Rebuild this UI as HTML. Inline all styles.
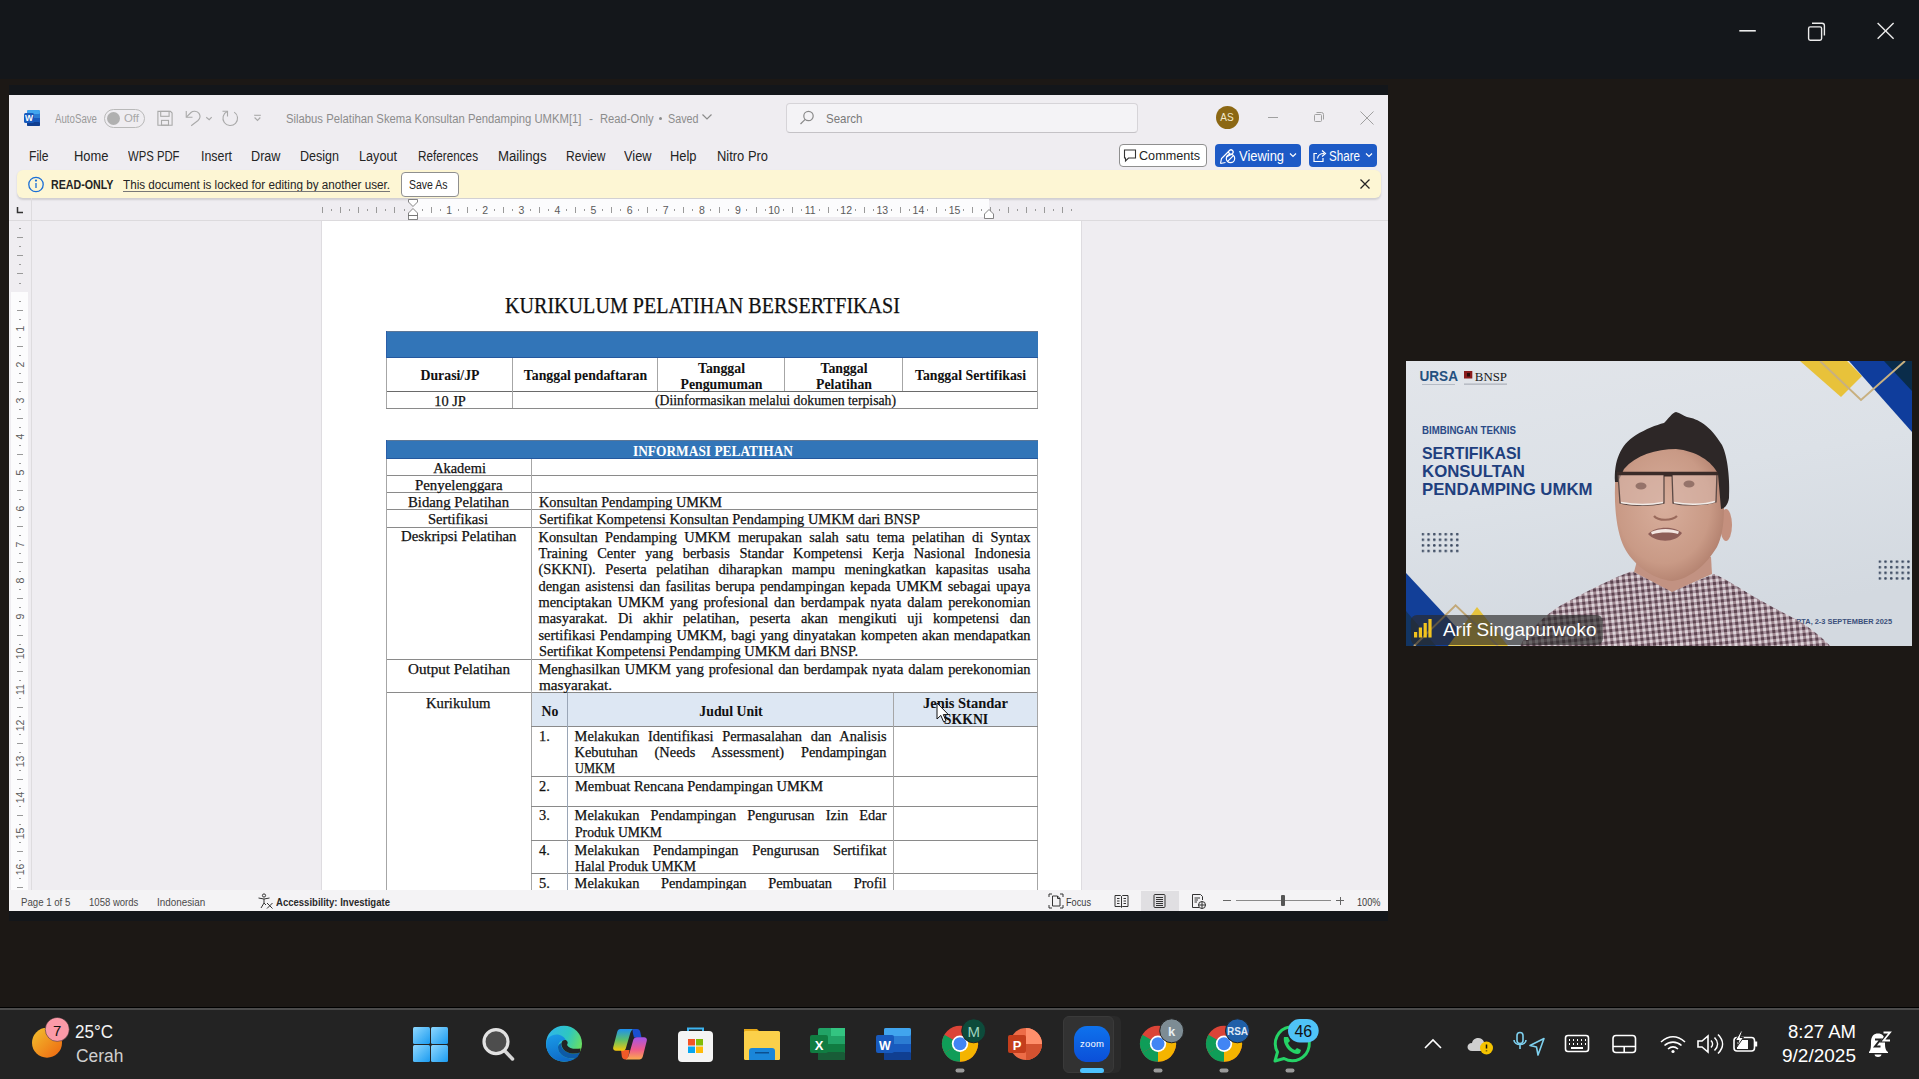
<!DOCTYPE html>
<html><head><meta charset="utf-8">
<style>
*{margin:0;padding:0;box-sizing:border-box}
html,body{width:1919px;height:1079px;overflow:hidden;background:#1c1815;font-family:"Liberation Sans",sans-serif;position:relative}
.a{position:absolute}
.t{position:absolute;white-space:pre;line-height:1;display:inline-block}
.s{font-family:"Liberation Serif",serif;color:#111;-webkit-text-stroke:0.25px currentColor}
.b{font-weight:bold}
.hl{position:absolute;height:1px;background:#8a8a8a}
.vl{position:absolute;width:1px;background:#8a8a8a}
.jl{position:absolute;white-space:nowrap;line-height:1;text-align:justify;text-align-last:justify;font-family:"Liberation Serif",serif;color:#111;font-size:14.4px;-webkit-text-stroke:0.25px #111}
</style></head>
<body>
<!-- zoom top bar -->
<div class="a" style="left:0;top:0;width:1919px;height:79px;background:#14171b"></div>
<!-- window controls -->
<svg class="a" style="left:1730px;top:15px" width="175" height="32" viewBox="0 0 175 32">
 <g stroke="#ececec" stroke-width="1.4" fill="none">
  <line x1="9.3" y1="15.8" x2="25.8" y2="15.8" stroke-width="1.6"></line>
  <rect x="78.6" y="11.9" width="13" height="13.3" rx="1.6"></rect>
  <path d="M82 8.2 h10 a2.4 2.4 0 0 1 2.4 2.4 v10"></path>
  <line x1="147.6" y1="8" x2="163.6" y2="23.8"></line><line x1="163.6" y1="8" x2="147.6" y2="23.8"></line>
 </g>
</svg>
<!-- window shadow strips -->
<div class="a" style="left:9px;top:85px;width:1379px;height:10px;background:#13161a"></div>
<div class="a" style="left:9px;top:911px;width:1379px;height:10px;background:#13161a"></div>

<!-- WORD WINDOW -->
<div class="a" id="win" style="left:9px;top:95px;width:1379px;height:816px;background:#efedf1;overflow:hidden">
</div>


<div class="a" style="left:0;top:0;width:1919px;height:1079px;clip-path:inset(221px 531px 189px 9px)">
<div class="a" style="left:322px;top:221px;width:759px;height:680px;background:#ffffff"></div>
<div class="a" style="left:321px;top:221px;width:1px;height:680px;background:#dedce0"></div>
<div class="a" style="left:1081px;top:221px;width:1px;height:680px;background:#dedce0"></div>
<div class="t s" style="left: 504.5px; top: 294px; font-size: 23px; color: rgb(17, 17, 17); transform: scaleX(0.8734); transform-origin: left top;">KURIKULUM PELATIHAN BERSERTFIKASI</div>
<div class="a" style="left:386px;top:331px;width:652px;height:27px;background:#3275b8"></div>
<div class="a" style="left:386px;top:331px;width:652px;height:1px;background:#5c7797"></div>
<div class="a" style="left:386px;top:357px;width:652px;height:1px;background:#24589e"></div>
<div class="a" style="left:386px;top:331px;width:1px;height:27px;background:#2a5ea8"></div>
<div class="a" style="left:386px;top:358px;width:1px;height:34px;background:#a6a6a6"></div>
<div class="a" style="left:512px;top:358px;width:1px;height:34px;background:#a6a6a6"></div>
<div class="a" style="left:657px;top:358px;width:1px;height:34px;background:#a6a6a6"></div>
<div class="a" style="left:784px;top:358px;width:1px;height:34px;background:#a6a6a6"></div>
<div class="a" style="left:902px;top:358px;width:1px;height:34px;background:#a6a6a6"></div>
<div class="a" style="left:1037px;top:358px;width:1px;height:34px;background:#a6a6a6"></div>
<div class="a" style="left:386px;top:391px;width:652px;height:1px;background:#6a6a6a"></div>
<div class="a" style="left:386px;top:391px;width:1px;height:18px;background:#a6a6a6"></div>
<div class="a" style="left:512px;top:391px;width:1px;height:18px;background:#a6a6a6"></div>
<div class="a" style="left:1037px;top:391px;width:1px;height:18px;background:#a6a6a6"></div>
<div class="a" style="left:386px;top:408px;width:652px;height:1px;background:#8a8a8a"></div>
<div class="t s" style="left:150.0px;width:600px;text-align:center;top:369.2px;font-size:13.8px;color:#111;font-weight:bold;-webkit-text-stroke:0.05px currentColor;">Durasi/JP</div>
<div class="t s" style="left:285.5px;width:600px;text-align:center;top:369.2px;font-size:13.8px;color:#111;font-weight:bold;-webkit-text-stroke:0.05px currentColor;">Tanggal pendaftaran</div>
<div class="t s" style="left:421.5px;width:600px;text-align:center;top:361.5px;font-size:13.8px;color:#111;font-weight:bold;-webkit-text-stroke:0.05px currentColor;">Tanggal</div>
<div class="t s" style="left:421.5px;width:600px;text-align:center;top:377.7px;font-size:13.8px;color:#111;font-weight:bold;-webkit-text-stroke:0.05px currentColor;">Pengumuman</div>
<div class="t s" style="left:544.0px;width:600px;text-align:center;top:361.5px;font-size:13.8px;color:#111;font-weight:bold;-webkit-text-stroke:0.05px currentColor;">Tanggal</div>
<div class="t s" style="left:544.0px;width:600px;text-align:center;top:377.7px;font-size:13.8px;color:#111;font-weight:bold;-webkit-text-stroke:0.05px currentColor;">Pelatihan</div>
<div class="t s" style="left:670.5px;width:600px;text-align:center;top:369.2px;font-size:13.8px;color:#111;font-weight:bold;-webkit-text-stroke:0.05px currentColor;">Tanggal Sertifikasi</div>
<div class="t s" style="left:150.0px;width:600px;text-align:center;top:393.7px;font-size:14.4px;color:#111;">10 JP</div>
<div class="t s" style="left: 654.5px; top: 393.4px; font-size: 14.2px; color: rgb(17, 17, 17); transform: scaleX(0.9663); transform-origin: left top;">(Diinformasikan melalui dokumen terpisah)</div>
<div class="a" style="left:386px;top:440px;width:652px;height:19px;background:#3275b8"></div>
<div class="a" style="left:386px;top:440px;width:652px;height:1px;background:#5c7797"></div>
<div class="a" style="left:386px;top:458px;width:652px;height:1px;background:#24589e"></div>
<div class="a" style="left:386px;top:440px;width:1px;height:19px;background:#2a5ea8"></div>
<div class="t s" style="left: 632.5px; top: 443.5px; font-size: 14.2px; color: rgb(255, 255, 255); font-weight: bold; -webkit-text-stroke: 0.05px currentcolor; transform: scaleX(0.9433); transform-origin: left top;">INFORMASI PELATIHAN</div>
<div class="a" style="left:386px;top:475px;width:652px;height:1px;background:#8a8a8a"></div>
<div class="a" style="left:386px;top:492px;width:652px;height:1px;background:#8a8a8a"></div>
<div class="a" style="left:386px;top:509px;width:652px;height:1px;background:#8a8a8a"></div>
<div class="a" style="left:386px;top:527px;width:652px;height:1px;background:#8a8a8a"></div>
<div class="a" style="left:386px;top:659px;width:652px;height:1px;background:#8a8a8a"></div>
<div class="a" style="left:386px;top:692px;width:652px;height:1px;background:#8a8a8a"></div>
<div class="a" style="left:386px;top:459px;width:1px;height:442px;background:#a6a6a6"></div>
<div class="a" style="left:1037px;top:459px;width:1px;height:442px;background:#a6a6a6"></div>
<div class="a" style="left:531px;top:459px;width:1px;height:442px;background:#a6a6a6"></div>
<div class="t s" style="left:159.5px;width:600px;text-align:center;top:460.9px;font-size:14.4px;color:#111;">Akademi</div>
<div class="t s" style="left: 414.5px; top: 477.9px; font-size: 14.4px; color: rgb(17, 17, 17); transform: scaleX(1.0328); transform-origin: left top;">Penyelenggara</div>
<div class="t s" style="left: 408px; top: 494.9px; font-size: 14.4px; color: rgb(17, 17, 17); transform: scaleX(1.0231); transform-origin: left top;">Bidang Pelatihan</div>
<div class="t s" style="left: 428px; top: 511.9px; font-size: 14.4px; color: rgb(17, 17, 17); transform: scaleX(1.0143); transform-origin: left top;">Sertifikasi</div>
<div class="t s" style="left: 400.5px; top: 529.3px; font-size: 14.4px; color: rgb(17, 17, 17); transform: scaleX(1.0284); transform-origin: left top;">Deskripsi Pelatihan</div>
<div class="t s" style="left: 407.5px; top: 661.7px; font-size: 14.4px; color: rgb(17, 17, 17); transform: scaleX(1.0502); transform-origin: left top;">Output Pelatihan</div>
<div class="t s" style="left: 426px; top: 695.5px; font-size: 14.4px; color: rgb(17, 17, 17); transform: scaleX(1.0213); transform-origin: left top;">Kurikulum</div>
<div class="t s" style="left: 538.5px; top: 494.9px; font-size: 14.4px; color: rgb(17, 17, 17); transform: scaleX(0.9909); transform-origin: left top;">Konsultan Pendamping UMKM</div>
<div class="t s" style="left: 538.5px; top: 511.9px; font-size: 14.4px; color: rgb(17, 17, 17); transform: scaleX(1.0012); transform-origin: left top;">Sertifikat Kompetensi Konsultan Pendamping UMKM dari BNSP</div>
<div class="jl" style="left:538.5px;top:529.5px;width:492.0px;font-size:14.4px">Konsultan Pendamping UMKM merupakan salah satu tema pelatihan di Syntax</div>
<div class="jl" style="left:538.5px;top:545.9px;width:492.0px;font-size:14.4px">Training Center yang berbasis Standar Kompetensi Kerja Nasional Indonesia</div>
<div class="jl" style="left:538.5px;top:562.3px;width:492.0px;font-size:14.4px">(SKKNI). Peserta pelatihan diharapkan mampu meningkatkan kapasitas usaha</div>
<div class="jl" style="left:538.5px;top:578.7px;width:492.0px;font-size:14.4px">dengan asistensi dan fasilitas berupa pendampingan kepada UMKM sebagai upaya</div>
<div class="jl" style="left:538.5px;top:595.1px;width:492.0px;font-size:14.4px">menciptakan UMKM yang profesional dan berdampak nyata dalam perekonomian</div>
<div class="jl" style="left:538.5px;top:611.4px;width:492.0px;font-size:14.4px">masyarakat. Di akhir pelatihan, peserta akan mengikuti uji kompetensi dan</div>
<div class="jl" style="left:538.5px;top:627.8px;width:492.0px;font-size:14.4px">sertifikasi Pendamping UMKM, bagi yang dinyatakan kompeten akan mendapatkan</div>
<div class="t s" style="left: 538.5px; top: 644.2px; font-size: 14.4px; color: rgb(17, 17, 17); transform: scaleX(0.9976); transform-origin: left top;">Sertifikat Kompetensi Pendamping UMKM dari BNSP.</div>
<div class="jl" style="left:538.5px;top:661.7px;width:492.0px;font-size:14.4px">Menghasilkan UMKM yang profesional dan berdampak nyata dalam perekonomian</div>
<div class="t s" style="left: 538.5px; top: 677.9px; font-size: 14.4px; color: rgb(17, 17, 17); transform: scaleX(1.0561); transform-origin: left top;">masyarakat.</div>
<div class="a" style="left:532px;top:693px;width:505px;height:33px;background:#dde7f3"></div>
<div class="a" style="left:531px;top:726px;width:507px;height:1px;background:#8a8a8a"></div>
<div class="a" style="left:531px;top:776px;width:507px;height:1px;background:#8a8a8a"></div>
<div class="a" style="left:531px;top:806px;width:507px;height:1px;background:#8a8a8a"></div>
<div class="a" style="left:531px;top:840px;width:507px;height:1px;background:#8a8a8a"></div>
<div class="a" style="left:531px;top:873px;width:507px;height:1px;background:#8a8a8a"></div>
<div class="a" style="left:567px;top:693px;width:1px;height:208px;background:#9aa6b6"></div>
<div class="a" style="left:893px;top:693px;width:1px;height:208px;background:#a6a6a6"></div>
<div class="t s" style="left:250.0px;width:600px;text-align:center;top:704.5px;font-size:13.8px;color:#111;font-weight:bold;-webkit-text-stroke:0.05px currentColor;">No</div>
<div class="t s" style="left:431.0px;width:600px;text-align:center;top:704.5px;font-size:13.8px;color:#111;font-weight:bold;-webkit-text-stroke:0.05px currentColor;">Judul Unit</div>
<div class="t s" style="left: 922.5px; top: 696.6px; font-size: 13.8px; color: rgb(17, 17, 17); font-weight: bold; -webkit-text-stroke: 0.05px currentcolor; transform: scaleX(1.0508); transform-origin: left top;">Jenis Standar</div>
<div class="t s" style="left:666.0px;width:600px;text-align:center;top:712.6px;font-size:13.8px;color:#111;font-weight:bold;-webkit-text-stroke:0.05px currentColor;">SKKNI</div>
<div class="t s" style="left:539.0px;top:728.6px;font-size:14.4px;color:#111;">1.</div>
<div class="t s" style="left:539.0px;top:779.2px;font-size:14.4px;color:#111;">2.</div>
<div class="t s" style="left:539.0px;top:808.4px;font-size:14.4px;color:#111;">3.</div>
<div class="t s" style="left:539.0px;top:842.6px;font-size:14.4px;color:#111;">4.</div>
<div class="t s" style="left:539.0px;top:876.1px;font-size:14.4px;color:#111;">5.</div>
<div class="jl" style="left:574.6px;top:728.6px;width:311.9px;font-size:14.4px">Melakukan Identifikasi Permasalahan dan Analisis</div>
<div class="jl" style="left:574.6px;top:745.0px;width:311.9px;font-size:14.4px">Kebutuhan (Needs Assessment) Pendampingan</div>
<div class="t s" style="left: 574.6px; top: 761.4px; font-size: 14.4px; color: rgb(17, 17, 17); transform: scaleX(0.8622); transform-origin: left top;">UMKM</div>
<div class="t s" style="left: 574.6px; top: 779.2px; font-size: 14.4px; color: rgb(17, 17, 17); transform: scaleX(1.0025); transform-origin: left top;">Membuat Rencana Pendampingan UMKM</div>
<div class="jl" style="left:574.6px;top:808.4px;width:311.9px;font-size:14.4px">Melakukan Pendampingan Pengurusan Izin Edar</div>
<div class="t s" style="left: 574.6px; top: 824.5px; font-size: 14.4px; color: rgb(17, 17, 17); transform: scaleX(0.9502); transform-origin: left top;">Produk UMKM</div>
<div class="jl" style="left:574.6px;top:842.6px;width:311.9px;font-size:14.4px">Melakukan Pendampingan Pengurusan Sertifikat</div>
<div class="t s" style="left: 574.6px; top: 858.6px; font-size: 14.4px; color: rgb(17, 17, 17); transform: scaleX(0.9579); transform-origin: left top;">Halal Produk UMKM</div>
<div class="jl" style="left:574.6px;top:876.1px;width:311.9px;font-size:14.4px">Melakukan Pendampingan Pembuatan Profil</div>
<svg class="a" style="left:936px;top:702px" width="14" height="22" viewBox="0 0 14 22"><path d="M1 1 L1 17 L4.8 13.4 L7.6 19.8 L10 18.8 L7.3 12.6 L12.4 12.6 Z" fill="#fff" stroke="#111" stroke-width="1"></path></svg>
</div>
<!-- title bar row -->
<svg class="a" style="left:22px;top:108px" width="20" height="20" viewBox="0 0 20 20">
 <rect x="5" y="2" width="13" height="16" rx="1.5" fill="#2b7cd3"></rect>
 <rect x="5" y="2" width="13" height="4" rx="1.5" fill="#41a5ee"></rect>
 <rect x="5" y="10" width="13" height="4" fill="#185abd"></rect>
 <rect x="5" y="14" width="13" height="4" rx="1" fill="#103f91"></rect>
 <rect x="2" y="5" width="10" height="10" rx="1.5" fill="#185abd"></rect>
 <text x="7" y="13.2" font-family="Liberation Sans" font-weight="bold" font-size="8.5" fill="#fff" text-anchor="middle">W</text>
</svg>
<div class="t" style="left: 55px; top: 113px; font-size: 12px; color: rgb(154, 154, 154); transform: scaleX(0.807); transform-origin: left top;">AutoSave</div>
<div class="a" style="left:104px;top:109px;width:41px;height:19px;border:1px solid #b9b9b9;border-radius:10px"></div>
<div class="a" style="left:107px;top:112px;width:13px;height:13px;border-radius:7px;background:#b0b0b0"></div>
<div class="t" style="left: 124px; top: 113px; font-size: 11.5px; color: rgb(168, 168, 168); transform: scaleX(0.9907); transform-origin: left top;">Off</div>
<svg class="a" style="left:155px;top:108px" width="120" height="20" viewBox="0 0 120 20" fill="none" stroke="#a9a9a9" stroke-width="1.1">
 <path d="M2.9 3.4 H15.5 L17.1 5 V17.2 H2.9 Z"></path>
 <rect x="5.7" y="3.4" width="8.4" height="4.9"></rect>
 <rect x="6.5" y="12.4" width="7" height="4.8"></rect>
 <path d="M31.25 3 V9.25 H37.5"></path><path d="M31.6 8.9 L36 4.5 C37.8 2.8 42 2.6 44 5.4 C45.6 7.8 44.8 10.8 43 12.5 L36.2 17.7"></path>
 <path d="M51.25 9.25 L54.2 11.75 L56.7 9.1"></path>
 <path d="M67.5 3.3 H72.5 V8.6"></path><path d="M72.2 3.6 A7.3 7.3 0 1 0 79.2 4.1"></path>
 <path d="M99.1 7.3 H105.8"></path><path d="M99.6 9.5 L102.5 12.5 L105.3 9.5"></path>
</svg>
<div class="t" style="left: 285.5px; top: 113px; font-size: 12px; color: rgb(140, 140, 140); transform: scaleX(0.9405); transform-origin: left top;">Silabus Pelatihan Skema Konsultan Pendamping UMKM[1]</div>
<div class="t" style="left:589px;top:113px;font-size:12px;color:#8c8c8c">-</div>
<div class="t" style="left: 599.5px; top: 113px; font-size: 12px; color: rgb(140, 140, 140); transform: scaleX(0.9327); transform-origin: left top;">Read-Only</div>
<div class="a" style="left:658.5px;top:117px;width:3px;height:3px;border-radius:2px;background:#8c8c8c"></div>
<div class="t" style="left: 667.5px; top: 113px; font-size: 12px; color: rgb(140, 140, 140); transform: scaleX(0.8962); transform-origin: left top;">Saved</div>
<svg class="a" style="left:700px;top:112px" width="14" height="10" viewBox="0 0 14 10" fill="none" stroke="#8c8c8c" stroke-width="1.2"><path d="M2.5 2.5 l4.5 4.5 l4.5 -4.5"></path></svg>
<!-- search -->
<div class="a" style="left:786px;top:103px;width:352px;height:30px;border:1px solid #d6d4d8;border-bottom-color:#c4c2c6;border-radius:4px;background:#f4f3f6"></div>
<svg class="a" style="left:798px;top:109px" width="18" height="18" viewBox="0 0 18 18" fill="none" stroke="#8a8a8a" stroke-width="1.2"><circle cx="10.5" cy="7" r="4.7"></circle><path d="M7.2 10.3 L2.5 15"></path></svg>
<div class="t" style="left: 826px; top: 112px; font-size: 13px; color: rgb(122, 122, 122); transform: scaleX(0.8859); transform-origin: left top;">Search</div>
<!-- avatar & window buttons -->
<div class="a" style="left:1215.5px;top:106.3px;width:23px;height:23px;border-radius:12px;background:#8c6814"></div>
<div class="t" style="left:1218px;top:113px;width:18px;text-align:center;font-size:10px;color:#f2e8cc">AS</div>
<div class="a" style="left:1268px;top:117px;width:10px;height:1px;background:#a0a0a0"></div>
<svg class="a" style="left:1312px;top:110px" width="14" height="14" viewBox="0 0 14 14" fill="none" stroke="#a0a0a0" stroke-width="1"><rect x="2.5" y="4.5" width="7" height="7" rx="1"></rect><path d="M4.5 2.5 h5 a2 2 0 0 1 2 2 v5"></path></svg>
<svg class="a" style="left:1359px;top:110px" width="16" height="16" viewBox="0 0 16 16" fill="none" stroke="#a0a0a0" stroke-width="1"><path d="M1.5 1.5 L14.5 14.5 M14.5 1.5 L1.5 14.5"></path></svg>

<!-- menu row -->
<div class="t" style="left: 29px; top: 149px; font-size: 14px; color: rgb(36, 36, 36); transform: scaleX(0.8643); transform-origin: left top;">File</div>
<div class="t" style="left: 73.5px; top: 149px; font-size: 14px; color: rgb(36, 36, 36); transform: scaleX(0.9235); transform-origin: left top;">Home</div>
<div class="t" style="left: 127.5px; top: 149px; font-size: 14px; color: rgb(36, 36, 36); transform: scaleX(0.8074); transform-origin: left top;">WPS PDF</div>
<div class="t" style="left: 200.5px; top: 149px; font-size: 14px; color: rgb(36, 36, 36); transform: scaleX(0.8853); transform-origin: left top;">Insert</div>
<div class="t" style="left: 251px; top: 149px; font-size: 14px; color: rgb(36, 36, 36); transform: scaleX(0.9029); transform-origin: left top;">Draw</div>
<div class="t" style="left: 300px; top: 149px; font-size: 14px; color: rgb(36, 36, 36); transform: scaleX(0.8946); transform-origin: left top;">Design</div>
<div class="t" style="left: 358.5px; top: 149px; font-size: 14px; color: rgb(36, 36, 36); transform: scaleX(0.9038); transform-origin: left top;">Layout</div>
<div class="t" style="left: 417.5px; top: 149px; font-size: 14px; color: rgb(36, 36, 36); transform: scaleX(0.8381); transform-origin: left top;">References</div>
<div class="t" style="left: 497.5px; top: 149px; font-size: 14px; color: rgb(36, 36, 36); transform: scaleX(0.9443); transform-origin: left top;">Mailings</div>
<div class="t" style="left: 565.5px; top: 149px; font-size: 14px; color: rgb(36, 36, 36); transform: scaleX(0.8604); transform-origin: left top;">Review</div>
<div class="t" style="left: 624px; top: 149px; font-size: 14px; color: rgb(36, 36, 36); transform: scaleX(0.9138); transform-origin: left top;">View</div>
<div class="t" style="left: 670px; top: 149px; font-size: 14px; color: rgb(36, 36, 36); transform: scaleX(0.9202); transform-origin: left top;">Help</div>
<div class="t" style="left: 716.5px; top: 149px; font-size: 14px; color: rgb(36, 36, 36); transform: scaleX(0.9233); transform-origin: left top;">Nitro Pro</div>

<!-- comments / viewing / share -->
<div class="a" style="left:1119px;top:144px;width:88px;height:23px;border:1px solid #8f8f8f;border-radius:4px;background:#fff"></div>
<svg class="a" style="left:1123px;top:148px" width="14" height="15" viewBox="0 0 14 15" fill="none" stroke="#333" stroke-width="1.1"><path d="M1.5 2 h11 v8 h-7 l-3 3 v-3 h-1 z"></path></svg>
<div class="t" style="left: 1139px; top: 149px; font-size: 13.5px; color: rgb(36, 36, 36); transform: scaleX(0.9346); transform-origin: left top;">Comments</div>
<div class="a" style="left:1215px;top:144px;width:86px;height:23px;border-radius:4px;background:#1d5ac6"></div>
<svg class="a" style="left:1218px;top:146px" width="20" height="19" viewBox="0 0 20 19" fill="none" stroke="#fff" stroke-width="1.2"><path d="M2.5 17.5 L3.5 12.5 L11.5 4.5 a2.1 2.1 0 0 1 3 3 L8.5 11"></path><path d="M2.5 17.5 L7.5 16.5"></path><path d="M10 6 l3 3"></path><circle cx="12.5" cy="12.5" r="4.2"></circle><path d="M9.6 15.4 l5.8 -5.8"></path></svg>
<div class="t" style="left: 1239px; top: 149px; font-size: 14px; color: rgb(255, 255, 255); transform: scaleX(0.9225); transform-origin: left top;">Viewing</div>
<svg class="a" style="left:1288px;top:151px" width="10" height="8" viewBox="0 0 10 8" fill="none" stroke="#fff" stroke-width="1.2"><path d="M2 2.5 l3 3 l3 -3"></path></svg>
<div class="a" style="left:1308.5px;top:144px;width:68px;height:23px;border-radius:4px;background:#1d5ac6"></div>
<svg class="a" style="left:1311px;top:147px" width="17" height="17" viewBox="0 0 17 17" fill="none" stroke="#fff" stroke-width="1.2"><path d="M6 6.5 H3 V14.5 H12 V11"></path><path d="M6.5 11.5 C7 8 9.5 6.5 13 6.5"></path><path d="M11 3.5 L14.5 6.5 L11 9.5"></path></svg>
<div class="t" style="left: 1329px; top: 149px; font-size: 14px; color: rgb(255, 255, 255); transform: scaleX(0.8298); transform-origin: left top;">Share</div>
<svg class="a" style="left:1364px;top:151px" width="10" height="8" viewBox="0 0 10 8" fill="none" stroke="#fff" stroke-width="1.2"><path d="M2 2.5 l3 3 l3 -3"></path></svg>

<!-- read only bar -->
<div class="a" style="left:16.5px;top:170px;width:1364px;height:28px;border-radius:6px;background:#fdf6d4;box-shadow:0 1.5px 2px rgba(0,0,0,0.13)"></div>
<svg class="a" style="left:27px;top:175px" width="18" height="18" viewBox="0 0 18 18" fill="none" stroke="#1b6fd6" stroke-width="1.3"><circle cx="9" cy="9.5" r="7.2"></circle><path d="M9 8 v5"></path><circle cx="9" cy="5.6" r="0.5" fill="#1b6fd6"></circle></svg>
<div class="t" style="left: 51px; top: 179px; font-size: 12.5px; font-weight: bold; color: rgb(36, 36, 36); transform: scaleX(0.8542); transform-origin: left top;">READ-ONLY</div>
<div class="t" style="left: 123px; top: 179px; font-size: 12.5px; color: rgb(36, 36, 36); transform: scaleX(0.9349); transform-origin: left top;">This document is locked for editing by another user.</div>
<div class="a" style="left:123px;top:191px;width:267px;height:1px;background:#777"></div>
<div class="a" style="left:401px;top:172px;width:57.5px;height:24.5px;border:1px solid #8f8f8f;border-radius:4px;background:#fff"></div>
<div class="t" style="left: 409px; top: 179px; font-size: 12.5px; color: rgb(36, 36, 36); transform: scaleX(0.8392); transform-origin: left top;">Save As</div>
<svg class="a" style="left:1358px;top:177px" width="14" height="14" viewBox="0 0 14 14" fill="none" stroke="#242424" stroke-width="1.3"><path d="M2.5 2.5 L11.5 11.5 M11.5 2.5 L2.5 11.5"></path></svg>

<!-- ruler -->
<div class="a" style="left:31px;top:198px;width:1px;height:692px;background:#dedcdf"></div>
<div class="a" style="left:9px;top:220px;width:1379px;height:1px;background:#dcdadd"></div>
<svg class="a" style="left:15px;top:205px" width="10" height="10" viewBox="0 0 10 10" fill="none" stroke="#333" stroke-width="1.5"><path d="M2.5 2 V7.5 H8"></path></svg>
<div class="a" style="left:413px;top:199px;width:576px;height:18px;background:#fcfcfd"></div>
<div class="a" style="left:322.2px;top:207px;width:1px;height:6px;background:#9a9a9a"></div>
<div class="a" style="left:331.3px;top:209px;width:1px;height:2px;background:#9a9a9a"></div>
<div class="a" style="left:340.3px;top:207px;width:1px;height:6px;background:#9a9a9a"></div>
<div class="a" style="left:349.3px;top:209px;width:1px;height:2px;background:#9a9a9a"></div>
<div class="a" style="left:358.4px;top:207px;width:1px;height:6px;background:#9a9a9a"></div>
<div class="a" style="left:367.4px;top:209px;width:1px;height:2px;background:#9a9a9a"></div>
<div class="a" style="left:376.4px;top:207px;width:1px;height:6px;background:#9a9a9a"></div>
<div class="a" style="left:385.4px;top:209px;width:1px;height:2px;background:#9a9a9a"></div>
<div class="a" style="left:394.4px;top:207px;width:1px;height:6px;background:#9a9a9a"></div>
<div class="a" style="left:403.5px;top:209px;width:1px;height:2px;background:#9a9a9a"></div>
<div class="a" style="left:421.5px;top:209px;width:1px;height:2px;background:#9a9a9a"></div>
<div class="a" style="left:430.6px;top:207px;width:1px;height:6px;background:#9a9a9a"></div>
<div class="a" style="left:439.6px;top:209px;width:1px;height:2px;background:#9a9a9a"></div>
<div class="t" style="left:439.1px;top:205px;width:20px;text-align:center;font-size:10.5px;color:#5a5a5a">1</div>
<div class="a" style="left:457.6px;top:209px;width:1px;height:2px;background:#9a9a9a"></div>
<div class="a" style="left:466.6px;top:207px;width:1px;height:6px;background:#9a9a9a"></div>
<div class="a" style="left:475.7px;top:209px;width:1px;height:2px;background:#9a9a9a"></div>
<div class="t" style="left:475.2px;top:205px;width:20px;text-align:center;font-size:10.5px;color:#5a5a5a">2</div>
<div class="a" style="left:493.7px;top:209px;width:1px;height:2px;background:#9a9a9a"></div>
<div class="a" style="left:502.8px;top:207px;width:1px;height:6px;background:#9a9a9a"></div>
<div class="a" style="left:511.8px;top:209px;width:1px;height:2px;background:#9a9a9a"></div>
<div class="t" style="left:511.3px;top:205px;width:20px;text-align:center;font-size:10.5px;color:#5a5a5a">3</div>
<div class="a" style="left:529.8px;top:209px;width:1px;height:2px;background:#9a9a9a"></div>
<div class="a" style="left:538.9px;top:207px;width:1px;height:6px;background:#9a9a9a"></div>
<div class="a" style="left:547.9px;top:209px;width:1px;height:2px;background:#9a9a9a"></div>
<div class="t" style="left:547.4px;top:205px;width:20px;text-align:center;font-size:10.5px;color:#5a5a5a">4</div>
<div class="a" style="left:565.9px;top:209px;width:1px;height:2px;background:#9a9a9a"></div>
<div class="a" style="left:575.0px;top:207px;width:1px;height:6px;background:#9a9a9a"></div>
<div class="a" style="left:584.0px;top:209px;width:1px;height:2px;background:#9a9a9a"></div>
<div class="t" style="left:583.5px;top:205px;width:20px;text-align:center;font-size:10.5px;color:#5a5a5a">5</div>
<div class="a" style="left:602.0px;top:209px;width:1px;height:2px;background:#9a9a9a"></div>
<div class="a" style="left:611.0px;top:207px;width:1px;height:6px;background:#9a9a9a"></div>
<div class="a" style="left:620.1px;top:209px;width:1px;height:2px;background:#9a9a9a"></div>
<div class="t" style="left:619.6px;top:205px;width:20px;text-align:center;font-size:10.5px;color:#5a5a5a">6</div>
<div class="a" style="left:638.1px;top:209px;width:1px;height:2px;background:#9a9a9a"></div>
<div class="a" style="left:647.1px;top:207px;width:1px;height:6px;background:#9a9a9a"></div>
<div class="a" style="left:656.2px;top:209px;width:1px;height:2px;background:#9a9a9a"></div>
<div class="t" style="left:655.7px;top:205px;width:20px;text-align:center;font-size:10.5px;color:#5a5a5a">7</div>
<div class="a" style="left:674.2px;top:209px;width:1px;height:2px;background:#9a9a9a"></div>
<div class="a" style="left:683.2px;top:207px;width:1px;height:6px;background:#9a9a9a"></div>
<div class="a" style="left:692.3px;top:209px;width:1px;height:2px;background:#9a9a9a"></div>
<div class="t" style="left:691.8px;top:205px;width:20px;text-align:center;font-size:10.5px;color:#5a5a5a">8</div>
<div class="a" style="left:710.3px;top:209px;width:1px;height:2px;background:#9a9a9a"></div>
<div class="a" style="left:719.4px;top:207px;width:1px;height:6px;background:#9a9a9a"></div>
<div class="a" style="left:728.4px;top:209px;width:1px;height:2px;background:#9a9a9a"></div>
<div class="t" style="left:727.9px;top:205px;width:20px;text-align:center;font-size:10.5px;color:#5a5a5a">9</div>
<div class="a" style="left:746.4px;top:209px;width:1px;height:2px;background:#9a9a9a"></div>
<div class="a" style="left:755.5px;top:207px;width:1px;height:6px;background:#9a9a9a"></div>
<div class="a" style="left:764.5px;top:209px;width:1px;height:2px;background:#9a9a9a"></div>
<div class="t" style="left:764.0px;top:205px;width:20px;text-align:center;font-size:10.5px;color:#5a5a5a">10</div>
<div class="a" style="left:782.5px;top:209px;width:1px;height:2px;background:#9a9a9a"></div>
<div class="a" style="left:791.5px;top:207px;width:1px;height:6px;background:#9a9a9a"></div>
<div class="a" style="left:800.6px;top:209px;width:1px;height:2px;background:#9a9a9a"></div>
<div class="t" style="left:800.1px;top:205px;width:20px;text-align:center;font-size:10.5px;color:#5a5a5a">11</div>
<div class="a" style="left:818.6px;top:209px;width:1px;height:2px;background:#9a9a9a"></div>
<div class="a" style="left:827.7px;top:207px;width:1px;height:6px;background:#9a9a9a"></div>
<div class="a" style="left:836.7px;top:209px;width:1px;height:2px;background:#9a9a9a"></div>
<div class="t" style="left:836.2px;top:205px;width:20px;text-align:center;font-size:10.5px;color:#5a5a5a">12</div>
<div class="a" style="left:854.7px;top:209px;width:1px;height:2px;background:#9a9a9a"></div>
<div class="a" style="left:863.8px;top:207px;width:1px;height:6px;background:#9a9a9a"></div>
<div class="a" style="left:872.8px;top:209px;width:1px;height:2px;background:#9a9a9a"></div>
<div class="t" style="left:872.3px;top:205px;width:20px;text-align:center;font-size:10.5px;color:#5a5a5a">13</div>
<div class="a" style="left:890.8px;top:209px;width:1px;height:2px;background:#9a9a9a"></div>
<div class="a" style="left:899.9px;top:207px;width:1px;height:6px;background:#9a9a9a"></div>
<div class="a" style="left:908.9px;top:209px;width:1px;height:2px;background:#9a9a9a"></div>
<div class="t" style="left:908.4px;top:205px;width:20px;text-align:center;font-size:10.5px;color:#5a5a5a">14</div>
<div class="a" style="left:926.9px;top:209px;width:1px;height:2px;background:#9a9a9a"></div>
<div class="a" style="left:936.0px;top:207px;width:1px;height:6px;background:#9a9a9a"></div>
<div class="a" style="left:945.0px;top:209px;width:1px;height:2px;background:#9a9a9a"></div>
<div class="t" style="left:944.5px;top:205px;width:20px;text-align:center;font-size:10.5px;color:#5a5a5a">15</div>
<div class="a" style="left:963.0px;top:209px;width:1px;height:2px;background:#9a9a9a"></div>
<div class="a" style="left:972.1px;top:207px;width:1px;height:6px;background:#9a9a9a"></div>
<div class="a" style="left:981.1px;top:209px;width:1px;height:2px;background:#9a9a9a"></div>
<div class="a" style="left:990.1px;top:207px;width:1px;height:6px;background:#9a9a9a"></div>
<div class="a" style="left:999.1px;top:209px;width:1px;height:2px;background:#9a9a9a"></div>
<div class="a" style="left:1008.1px;top:207px;width:1px;height:6px;background:#9a9a9a"></div>
<div class="a" style="left:1017.2px;top:209px;width:1px;height:2px;background:#9a9a9a"></div>
<div class="a" style="left:1026.2px;top:207px;width:1px;height:6px;background:#9a9a9a"></div>
<div class="a" style="left:1035.2px;top:209px;width:1px;height:2px;background:#9a9a9a"></div>
<div class="a" style="left:1044.2px;top:207px;width:1px;height:6px;background:#9a9a9a"></div>
<div class="a" style="left:1053.3px;top:209px;width:1px;height:2px;background:#9a9a9a"></div>
<div class="a" style="left:1062.3px;top:207px;width:1px;height:6px;background:#9a9a9a"></div>
<div class="a" style="left:1071.3px;top:209px;width:1px;height:2px;background:#9a9a9a"></div>
<!-- indent markers -->
<svg class="a" style="left:406px;top:199px" width="14" height="22" viewBox="0 0 14 22" fill="#fff" stroke="#666" stroke-width="0.8"><path d="M2.5 0.5 H11.5 V3 L7 7.5 L2.5 3 Z"></path><path d="M7 9.5 L11.5 14 V16.5 H2.5 V14 Z"></path><rect x="2.5" y="16.5" width="9" height="4"></rect></svg>
<svg class="a" style="left:982px;top:208px" width="14" height="12" viewBox="0 0 14 12" fill="#fff" stroke="#666" stroke-width="0.8"><path d="M7 1.5 L11.5 6 V10.5 H2.5 V6 Z"></path></svg>
<!-- vertical ruler -->
<div class="a" style="left:11px;top:292px;width:17px;height:598px;background:#fcfcfd"></div>
<div class="a" style="left:19px;top:228.3px;width:2px;height:1px;background:#9a9a9a"></div>
<div class="a" style="left:17px;top:237.3px;width:6px;height:1px;background:#9a9a9a"></div>
<div class="a" style="left:19px;top:246.4px;width:2px;height:1px;background:#9a9a9a"></div>
<div class="a" style="left:17px;top:255.4px;width:6px;height:1px;background:#9a9a9a"></div>
<div class="a" style="left:19px;top:264.4px;width:2px;height:1px;background:#9a9a9a"></div>
<div class="a" style="left:17px;top:273.4px;width:6px;height:1px;background:#9a9a9a"></div>
<div class="a" style="left:19px;top:282.5px;width:2px;height:1px;background:#9a9a9a"></div>
<div class="a" style="left:19px;top:300.5px;width:2px;height:1px;background:#9a9a9a"></div>
<div class="a" style="left:17px;top:309.6px;width:6px;height:1px;background:#9a9a9a"></div>
<div class="a" style="left:19px;top:318.6px;width:2px;height:1px;background:#9a9a9a"></div>
<div class="t" style="left:10px;top:322.6px;width:20px;height:11px;text-align:center;font-size:10.5px;color:#5a5a5a;transform:rotate(-90deg)">1</div>
<div class="a" style="left:19px;top:336.6px;width:2px;height:1px;background:#9a9a9a"></div>
<div class="a" style="left:17px;top:345.6px;width:6px;height:1px;background:#9a9a9a"></div>
<div class="a" style="left:19px;top:354.7px;width:2px;height:1px;background:#9a9a9a"></div>
<div class="t" style="left:10px;top:358.7px;width:20px;height:11px;text-align:center;font-size:10.5px;color:#5a5a5a;transform:rotate(-90deg)">2</div>
<div class="a" style="left:19px;top:372.7px;width:2px;height:1px;background:#9a9a9a"></div>
<div class="a" style="left:17px;top:381.8px;width:6px;height:1px;background:#9a9a9a"></div>
<div class="a" style="left:19px;top:390.8px;width:2px;height:1px;background:#9a9a9a"></div>
<div class="t" style="left:10px;top:394.8px;width:20px;height:11px;text-align:center;font-size:10.5px;color:#5a5a5a;transform:rotate(-90deg)">3</div>
<div class="a" style="left:19px;top:408.8px;width:2px;height:1px;background:#9a9a9a"></div>
<div class="a" style="left:17px;top:417.9px;width:6px;height:1px;background:#9a9a9a"></div>
<div class="a" style="left:19px;top:426.9px;width:2px;height:1px;background:#9a9a9a"></div>
<div class="t" style="left:10px;top:430.9px;width:20px;height:11px;text-align:center;font-size:10.5px;color:#5a5a5a;transform:rotate(-90deg)">4</div>
<div class="a" style="left:19px;top:444.9px;width:2px;height:1px;background:#9a9a9a"></div>
<div class="a" style="left:17px;top:454.0px;width:6px;height:1px;background:#9a9a9a"></div>
<div class="a" style="left:19px;top:463.0px;width:2px;height:1px;background:#9a9a9a"></div>
<div class="t" style="left:10px;top:467.0px;width:20px;height:11px;text-align:center;font-size:10.5px;color:#5a5a5a;transform:rotate(-90deg)">5</div>
<div class="a" style="left:19px;top:481.0px;width:2px;height:1px;background:#9a9a9a"></div>
<div class="a" style="left:17px;top:490.1px;width:6px;height:1px;background:#9a9a9a"></div>
<div class="a" style="left:19px;top:499.1px;width:2px;height:1px;background:#9a9a9a"></div>
<div class="t" style="left:10px;top:503.1px;width:20px;height:11px;text-align:center;font-size:10.5px;color:#5a5a5a;transform:rotate(-90deg)">6</div>
<div class="a" style="left:19px;top:517.1px;width:2px;height:1px;background:#9a9a9a"></div>
<div class="a" style="left:17px;top:526.1px;width:6px;height:1px;background:#9a9a9a"></div>
<div class="a" style="left:19px;top:535.2px;width:2px;height:1px;background:#9a9a9a"></div>
<div class="t" style="left:10px;top:539.2px;width:20px;height:11px;text-align:center;font-size:10.5px;color:#5a5a5a;transform:rotate(-90deg)">7</div>
<div class="a" style="left:19px;top:553.2px;width:2px;height:1px;background:#9a9a9a"></div>
<div class="a" style="left:17px;top:562.2px;width:6px;height:1px;background:#9a9a9a"></div>
<div class="a" style="left:19px;top:571.3px;width:2px;height:1px;background:#9a9a9a"></div>
<div class="t" style="left:10px;top:575.3px;width:20px;height:11px;text-align:center;font-size:10.5px;color:#5a5a5a;transform:rotate(-90deg)">8</div>
<div class="a" style="left:19px;top:589.3px;width:2px;height:1px;background:#9a9a9a"></div>
<div class="a" style="left:17px;top:598.4px;width:6px;height:1px;background:#9a9a9a"></div>
<div class="a" style="left:19px;top:607.4px;width:2px;height:1px;background:#9a9a9a"></div>
<div class="t" style="left:10px;top:611.4px;width:20px;height:11px;text-align:center;font-size:10.5px;color:#5a5a5a;transform:rotate(-90deg)">9</div>
<div class="a" style="left:19px;top:625.4px;width:2px;height:1px;background:#9a9a9a"></div>
<div class="a" style="left:17px;top:634.5px;width:6px;height:1px;background:#9a9a9a"></div>
<div class="a" style="left:19px;top:643.5px;width:2px;height:1px;background:#9a9a9a"></div>
<div class="t" style="left:10px;top:647.5px;width:20px;height:11px;text-align:center;font-size:10.5px;color:#5a5a5a;transform:rotate(-90deg)">10</div>
<div class="a" style="left:19px;top:661.5px;width:2px;height:1px;background:#9a9a9a"></div>
<div class="a" style="left:17px;top:670.5px;width:6px;height:1px;background:#9a9a9a"></div>
<div class="a" style="left:19px;top:679.6px;width:2px;height:1px;background:#9a9a9a"></div>
<div class="t" style="left:10px;top:683.6px;width:20px;height:11px;text-align:center;font-size:10.5px;color:#5a5a5a;transform:rotate(-90deg)">11</div>
<div class="a" style="left:19px;top:697.6px;width:2px;height:1px;background:#9a9a9a"></div>
<div class="a" style="left:17px;top:706.7px;width:6px;height:1px;background:#9a9a9a"></div>
<div class="a" style="left:19px;top:715.7px;width:2px;height:1px;background:#9a9a9a"></div>
<div class="t" style="left:10px;top:719.7px;width:20px;height:11px;text-align:center;font-size:10.5px;color:#5a5a5a;transform:rotate(-90deg)">12</div>
<div class="a" style="left:19px;top:733.7px;width:2px;height:1px;background:#9a9a9a"></div>
<div class="a" style="left:17px;top:742.8px;width:6px;height:1px;background:#9a9a9a"></div>
<div class="a" style="left:19px;top:751.8px;width:2px;height:1px;background:#9a9a9a"></div>
<div class="t" style="left:10px;top:755.8px;width:20px;height:11px;text-align:center;font-size:10.5px;color:#5a5a5a;transform:rotate(-90deg)">13</div>
<div class="a" style="left:19px;top:769.8px;width:2px;height:1px;background:#9a9a9a"></div>
<div class="a" style="left:17px;top:778.9px;width:6px;height:1px;background:#9a9a9a"></div>
<div class="a" style="left:19px;top:787.9px;width:2px;height:1px;background:#9a9a9a"></div>
<div class="t" style="left:10px;top:791.9px;width:20px;height:11px;text-align:center;font-size:10.5px;color:#5a5a5a;transform:rotate(-90deg)">14</div>
<div class="a" style="left:19px;top:805.9px;width:2px;height:1px;background:#9a9a9a"></div>
<div class="a" style="left:17px;top:815.0px;width:6px;height:1px;background:#9a9a9a"></div>
<div class="a" style="left:19px;top:824.0px;width:2px;height:1px;background:#9a9a9a"></div>
<div class="t" style="left:10px;top:828.0px;width:20px;height:11px;text-align:center;font-size:10.5px;color:#5a5a5a;transform:rotate(-90deg)">15</div>
<div class="a" style="left:19px;top:842.0px;width:2px;height:1px;background:#9a9a9a"></div>
<div class="a" style="left:17px;top:851.1px;width:6px;height:1px;background:#9a9a9a"></div>
<div class="a" style="left:19px;top:860.1px;width:2px;height:1px;background:#9a9a9a"></div>
<div class="t" style="left:10px;top:864.1px;width:20px;height:11px;text-align:center;font-size:10.5px;color:#5a5a5a;transform:rotate(-90deg)">16</div>
<div class="a" style="left:19px;top:878.1px;width:2px;height:1px;background:#9a9a9a"></div>
<div class="a" style="left:17px;top:887.1px;width:6px;height:1px;background:#9a9a9a"></div>

<!-- status bar -->
<div class="a" style="left:9px;top:890px;width:1379px;height:21px;background:#f4f3f5"></div>
<div class="t" style="left: 20.5px; top: 897px; font-size: 11px; color: rgb(74, 74, 74); transform: scaleX(0.876); transform-origin: left top;">Page 1 of 5</div>
<div class="t" style="left: 88.6px; top: 897px; font-size: 11px; color: rgb(74, 74, 74); transform: scaleX(0.8686); transform-origin: left top;">1058 words</div>
<div class="t" style="left: 156.5px; top: 897px; font-size: 11px; color: rgb(74, 74, 74); transform: scaleX(0.8973); transform-origin: left top;">Indonesian</div>
<svg class="a" style="left:257px;top:893px" width="17" height="16" viewBox="0 0 17 16" fill="none" stroke="#333" stroke-width="1"><circle cx="7" cy="2.5" r="1.6"></circle><path d="M1.5 5 L7 6 L12.5 5 M7 6 V10 L4 15 M7 10 L9 12"></path><path d="M10 10 L15.5 15.5 M15.5 10 L10 15.5"></path></svg>
<div class="t" style="left: 275.7px; top: 897px; font-size: 11px; font-weight: bold; color: rgb(42, 42, 42); transform: scaleX(0.8672); transform-origin: left top;">Accessibility: Investigate</div>
<svg class="a" style="left:1048px;top:893px" width="17" height="16" viewBox="0 0 17 16" fill="none" stroke="#333" stroke-width="1"><path d="M1 4 V1 H4 M12 1 H15 V4 M15 12 V15 H12 M4 15 H1 V12"></path><path d="M4.5 3 H9.5 L12 5.5 V13 H4.5 Z M9.5 3 V5.5 H12"></path></svg>
<div class="t" style="left: 1066px; top: 897px; font-size: 11.5px; color: rgb(58, 58, 58); transform: scaleX(0.798); transform-origin: left top;">Focus</div>
<svg class="a" style="left:1113px;top:893px" width="17" height="16" viewBox="0 0 17 16" fill="none" stroke="#333" stroke-width="1"><path d="M2 2.5 H7.5 L8.5 3.5 L9.5 2.5 H15 V13.5 H9.5 L8.5 14.5 L7.5 13.5 H2 Z M8.5 3.5 V14"></path><path d="M4 5.5 H6.5 M4 8 H6.5 M4 10.5 H6.5 M10.5 5.5 H13 M10.5 8 H13 M10.5 10.5 H13"></path></svg>
<div class="a" style="left:1141px;top:891px;width:38px;height:20px;background:#e0dfe2"></div>
<svg class="a" style="left:1151px;top:893px" width="17" height="16" viewBox="0 0 17 16" fill="none" stroke="#333" stroke-width="1"><rect x="3" y="1.5" width="11" height="13" rx="1"></rect><path d="M5 4.5 H12 M5 6.5 H12 M5 8.5 H12 M5 10.5 H12 M5 12.5 H12"></path></svg>
<svg class="a" style="left:1190px;top:893px" width="17" height="17" viewBox="0 0 17 17" fill="none" stroke="#333" stroke-width="1"><path d="M9 14.5 H2.5 V1.5 H10.5 L12.5 3.5 V7"></path><path d="M4.5 5 H10 M4.5 7 H8 M4.5 9 H7"></path><circle cx="12" cy="12" r="3.5"></circle><path d="M8.5 12 H15.5 M12 8.5 V15.5"></path></svg>
<div class="a" style="left:1223px;top:900px;width:8px;height:1px;background:#666"></div>
<div class="a" style="left:1236px;top:900px;width:95px;height:1px;background:#8a8a8a"></div>
<div class="a" style="left:1281px;top:895px;width:4px;height:11px;background:#555;border-radius:1px"></div>
<div class="a" style="left:1336px;top:900px;width:8px;height:1px;background:#666"></div>
<div class="a" style="left:1339.5px;top:896.5px;width:1px;height:8px;background:#666"></div>
<div class="t" style="left: 1356.5px; top: 897px; font-size: 11px; color: rgb(58, 58, 58); transform: scaleX(0.8351); transform-origin: left top;">100%</div>

<!-- video panel -->
<svg class="a" style="left:1406px;top:361px" width="506" height="285" viewBox="0 0 506 285">
 <defs>
  <linearGradient id="vbg" x1="0" y1="0" x2="0.3" y2="1">
   <stop offset="0" stop-color="#e2e5ea"></stop><stop offset="0.5" stop-color="#dce1e7"></stop><stop offset="1" stop-color="#d3d9e0"></stop>
  </linearGradient>
  <pattern id="chk" width="6" height="6" patternUnits="userSpaceOnUse" patternTransform="rotate(-6)">
   <rect width="6" height="6" fill="#ded5da"></rect>
   <rect width="3" height="6" fill="#a08892"></rect>
   <rect width="6" height="3" fill="#aa94a0"></rect>
   <rect width="3" height="3" fill="#5c4450"></rect>
  </pattern>
  <radialGradient id="skin" cx="0.45" cy="0.45" r="0.6">
   <stop offset="0" stop-color="#d8ae9c"></stop><stop offset="0.7" stop-color="#c99a86"></stop><stop offset="1" stop-color="#b07e6c"></stop>
  </radialGradient>
  <pattern id="dots" width="5.73" height="5.62" patternUnits="userSpaceOnUse" x="15.55" y="171.85">
   <rect width="2.6" height="2.6" rx="1" fill="#3d4b62"></rect>
  </pattern>
  <pattern id="dots2" width="5.73" height="5.62" patternUnits="userSpaceOnUse" x="472.5" y="199.3">
   <rect width="2.6" height="2.6" rx="1" fill="#3d4b62"></rect>
  </pattern>
 </defs>
 <rect width="506" height="285" fill="url(#vbg)"></rect>
 <!-- top-right decor -->
 <polygon points="394,0 441,0 456,15 435,36" fill="#e8c23a"></polygon>
 <polygon points="443,0 506,0 506,71" fill="#0f3d9c"></polygon>
 <polygon points="478,0 506,0 506,30" fill="#0a2c4a"></polygon>
 <polyline points="414,0 455,39 499,0" fill="none" stroke="#c8b080" stroke-width="2"></polyline>
 <!-- bottom-left decor -->
 <polygon points="0,212 68,285 0,285" fill="#123f98"></polygon>
 <polygon points="0,250 30,285 0,285" fill="#123563"></polygon>
 <polygon points="71,246 102,285 42,285" fill="#e6c43c"></polygon>
 <polyline points="8,285 49.6,244.3 92,285" fill="none" stroke="#c2a878" stroke-width="2"></polyline>
 <!-- logos & text -->
 <text x="13.5" y="19.7" font-family="Liberation Sans" font-weight="bold" font-size="13.8" fill="#24507f" textLength="38.5" lengthAdjust="spacingAndGlyphs">URSA</text>
 <rect x="16" y="23" width="33" height="0.8" fill="#aab1bc"></rect>
 <rect x="58" y="10" width="8.3" height="7.5" fill="#8a1c1c"></rect>
 <rect x="61" y="12" width="3" height="3.5" fill="#2a0a0a"></rect>
 <text x="68.8" y="19.7" font-family="Liberation Serif" font-size="13.5" fill="#1a1a1a" textLength="32.2" lengthAdjust="spacingAndGlyphs">BNSP</text>
 <rect x="58" y="22.6" width="43" height="1" fill="#a0a5ae"></rect>
 <text x="16" y="73" font-family="Liberation Sans" font-weight="bold" font-size="10.5" fill="#2a4a86" textLength="94" lengthAdjust="spacingAndGlyphs">BIMBINGAN TEKNIS</text>
 <text x="16" y="97.5" font-family="Liberation Sans" font-weight="bold" font-size="17" fill="#1f3f7e" textLength="99" lengthAdjust="spacingAndGlyphs">SERTIFIKASI</text>
 <text x="16" y="115.6" font-family="Liberation Sans" font-weight="bold" font-size="17" fill="#1f3f7e" textLength="103" lengthAdjust="spacingAndGlyphs">KONSULTAN</text>
 <text x="16" y="133.6" font-family="Liberation Sans" font-weight="bold" font-size="17" fill="#1f3f7e" textLength="170.5" lengthAdjust="spacingAndGlyphs">PENDAMPING UMKM</text>
 <rect x="15.5" y="171.8" width="38.5" height="20" fill="url(#dots)"></rect>
 <rect x="472.4" y="199.2" width="34" height="20" fill="url(#dots2)"></rect>
 <text x="390" y="263" font-family="Liberation Sans" font-weight="bold" font-size="8" fill="#3a4f7a" textLength="96" lengthAdjust="spacingAndGlyphs">RTA, 2-3 SEPTEMBER 2025</text>
 <!-- person -->
 <path d="M114,286 C118,276 124,270 128,266 C140,254 152,245 165,239 C185,228 205,218 226,210 L266,230 L308,213 C320,218 332,226 345,234 C362,244 378,252 393,260 C408,270 418,278 425,286 Z" fill="url(#chk)"></path>
 <path d="M232,196 L305,196 L306,213 L266,231 L228,211 Z" fill="#c29282"></path>
 <ellipse cx="320" cy="164" rx="6" ry="16" fill="#c4907e"></ellipse>
 <path d="M210,108 C207,140 210,170 218,186 C226,202 245,218 266,220 C284,218 300,204 311,186 C318,172 320,150 316,110 C306,92 284,84 264,85 C242,86 220,94 210,108 Z" fill="url(#skin)"></path>
 <path d="M209,121 C208,100 214,84 230,74 C240,68 250,64 258,62 C262,58 266,52 270,51 C274,52 278,55 281,56 C292,58 304,64 316,84 C322,96 324,120 323,137 C322,144 318,148 315,148 L312,113 C306,100 290,90 270,88 C250,88 230,94 218,108 L212,121 Z" fill="#2d2727"></path>
 <path d="M212,112 L258,112 L258,142 C245,145 222,145 214,142 Z" fill="#d9b8ab" fill-opacity="0.6" stroke="#5c4a46" stroke-width="1.3"></path>
 <path d="M266,112 L311,112 L310,141 C300,144 278,145 267,142 Z" fill="#d9b8ab" fill-opacity="0.6" stroke="#5c4a46" stroke-width="1.3"></path>
 <path d="M211,112.5 L312,112.5" stroke="#3a2b28" stroke-width="3.5"></path>
 <path d="M258,114 L266,114" stroke="#3a2b28" stroke-width="3"></path>
 <path d="M215,141.5 C228,144 245,144 257,141.5 M268,141.5 C280,144 298,144 309,140.5" stroke="#f2ece8" stroke-width="1.5" fill="none"></path>
 <ellipse cx="235" cy="125" rx="5.5" ry="3.5" fill="#7a5a52" opacity="0.7"></ellipse>
 <ellipse cx="283" cy="123" rx="5.5" ry="3.5" fill="#7a5a52" opacity="0.7"></ellipse>
 <path d="M248,155 C252,160 266,160 271,155" fill="none" stroke="#9a6a5c" stroke-width="2.2"></path>
 <path d="M242,173 C250,165 268,165 276,172 C270,182 250,182 242,173 Z" fill="#8e5e58"></path>
 <path d="M245,171 C253,167 265,167 273,170.5 L272,173 C264,171 254,171 246,173.5 Z" fill="#f3e6e2"></path>
 <!-- name label -->
 <rect x="4.8" y="254" width="192" height="30" rx="6" fill="#2a2a2a" fill-opacity="0.66"></rect>
 <rect x="8" y="271" width="3.2" height="5.5" fill="#f2c31f"></rect>
 <rect x="12.8" y="266.5" width="3.2" height="10" fill="#f2c31f"></rect>
 <rect x="17.6" y="262" width="3.2" height="14.5" fill="#f2c31f"></rect>
 <rect x="22.4" y="258" width="3.2" height="18.5" fill="#f2c31f"></rect>
 <text x="37" y="275" font-family="Liberation Sans" font-size="17.5" fill="#ffffff" textLength="153.5" lengthAdjust="spacingAndGlyphs">Arif Singapurwoko</text>
</svg>

<!-- taskbar -->
<div class="a" style="left:0;top:1007px;width:1919px;height:1px;background:#000"></div>
<div class="a" style="left:0;top:1008px;width:1919px;height:2px;background:#4b4b4b"></div>
<div class="a" style="left:0;top:1010px;width:1919px;height:69px;background:#232323"></div>
<!-- weather -->
<svg class="a" style="left:28px;top:1014px" width="44" height="46" viewBox="0 0 44 46">
 <defs><linearGradient id="sun" x1="0" y1="0" x2="1" y2="1"><stop offset="0" stop-color="#f2c22e"></stop><stop offset="1" stop-color="#ee6410"></stop></linearGradient></defs>
 <circle cx="19" cy="28.75" r="15" fill="url(#sun)"></circle>
 <circle cx="29.25" cy="15.4" r="12" fill="#fb9aa8" stroke="#232323" stroke-width="0.5"></circle>
 <text x="29.25" y="21.5" font-family="Liberation Sans" font-size="15" fill="#111" text-anchor="middle">7</text>
</svg>
<div class="t" style="left: 75px; top: 1023.5px; font-size: 17.5px; color: rgb(244, 244, 244); transform: scaleX(0.9716); transform-origin: left top;">25°C</div>
<div class="t" style="left: 75.5px; top: 1047.5px; font-size: 17.5px; color: rgb(207, 207, 207); transform: scaleX(0.9964); transform-origin: left top;">Cerah</div>
<!-- windows logo -->
<svg class="a" style="left:413px;top:1027px" width="35" height="35" viewBox="0 0 35 35">
 <defs><linearGradient id="wl" x1="0" y1="0" x2="1" y2="1"><stop offset="0" stop-color="#8fd8ff"></stop><stop offset="1" stop-color="#1a9bf0"></stop></linearGradient></defs>
 <rect x="0" y="0" width="17" height="17" rx="1.5" fill="url(#wl)"></rect><rect x="18" y="0" width="17" height="17" rx="1.5" fill="url(#wl)"></rect>
 <rect x="0" y="18" width="17" height="17" rx="1.5" fill="url(#wl)"></rect><rect x="18" y="18" width="17" height="17" rx="1.5" fill="url(#wl)"></rect>
</svg>
<!-- search -->
<svg class="a" style="left:478px;top:1024px" width="40" height="40" viewBox="0 0 40 40">
 <line x1="25" y1="25" x2="34.5" y2="35" stroke="#d6d6d6" stroke-width="3.5" stroke-linecap="round"></line>
 <circle cx="18" cy="17.7" r="12" fill="#4d4d4d" stroke="#e2e2e2" stroke-width="3.2"></circle>
</svg>
<!-- edge -->
<svg class="a" style="left:545px;top:1025px" width="38" height="38" viewBox="0 0 38 38">
 <defs><linearGradient id="eg1" x1="0" y1="0.2" x2="1" y2="0.6"><stop offset="0" stop-color="#2fb5ec"></stop><stop offset="0.55" stop-color="#2ec7c0"></stop><stop offset="1" stop-color="#6ee05a"></stop></linearGradient>
 <linearGradient id="eg2" x1="0" y1="0" x2="0.3" y2="1"><stop offset="0" stop-color="#1a9ce8"></stop><stop offset="1" stop-color="#0f6cc8"></stop></linearGradient></defs>
 <circle cx="19" cy="18.7" r="18" fill="url(#eg1)"></circle>
 <path d="M1.2,19 C1.5,13 6,9.5 11.5,9.5 C16,9.5 19.5,12 21,15.5 C16,14.5 13,18 13,22.5 C13,29 20,33.5 27,33.5 C29,33.5 31,33 32.5,32 C29,35 24,36.7 19,36.7 C9,36.7 1,29 1.2,19 Z" fill="url(#eg2)"></path>
 <path d="M13,22.5 C13,29 20,33.5 27,33.5 C29,33.5 31,33 32.5,32 L35,27.5 C31,29 26,29 22,27 C18,25 15.5,22 16.5,18 C14,18.5 13,20.5 13,22.5 Z" fill="#0d5aa6"></path>
 <path d="M16.5,18 C17,15.5 19.5,14.5 21.5,15.5 C23,16.5 23,18.5 22,20 C24,23.5 29,24.5 35.5,23.5 L35,27.5 C31,29 26,29 22,27 C18,25 16,21.5 16.5,18 Z" fill="#232323"></path>
</svg>
<!-- copilot -->
<svg class="a" style="left:612px;top:1028px" width="36" height="33" viewBox="0 0 36 33">
 <defs><linearGradient id="cp1" x1="0" y1="0" x2="0" y2="1"><stop offset="0" stop-color="#1e90f0"></stop><stop offset="0.5" stop-color="#5cc06a"></stop><stop offset="1" stop-color="#f7c90a"></stop></linearGradient>
 <linearGradient id="cp2" x1="0" y1="0" x2="0" y2="1"><stop offset="0" stop-color="#a455e8"></stop><stop offset="0.55" stop-color="#ee5a8c"></stop><stop offset="1" stop-color="#fbaa4e"></stop></linearGradient></defs>
 <path d="M20.5,1 H25 C26.8,1 27.8,2 28.3,4 L29.5,9.5 H22 C21,6 20.5,3 20.5,1 Z" fill="#1a4fd0"></path>
 <path d="M9,22 H17.5 C17,26 16.5,29 15,31.5 H13.5 C11.5,31.5 10.3,30.5 9.8,28.5 Z" fill="#f05a28"></path>
 <path d="M8.5,1 H21 C19.5,2 18.5,4 18,6 L13.8,20.5 C13.3,22 12,22.8 10.5,22.8 H4 C2,22.8 0.7,21.2 1.2,19.2 L5.2,4 C5.7,2.2 6.8,1 8.5,1 Z" fill="url(#cp1)"></path>
 <path d="M25,9.3 H32 C34,9.3 35.3,10.8 34.8,12.8 L30.8,28.5 C30.3,30.3 29,31.5 27.3,31.5 H14 C15.5,30.5 16.5,28.5 17,26.5 L21.3,11.8 C21.8,10.3 23.2,9.3 25,9.3 Z" fill="url(#cp2)"></path>
</svg>
<!-- store -->
<svg class="a" style="left:677px;top:1026px" width="37" height="37" viewBox="0 0 37 37">
 <path d="M11 7 V2.5 H26 V7" fill="none" stroke="#3cb4f0" stroke-width="2"></path>
 <rect x="1" y="5" width="35" height="31" rx="4" fill="#f4f4f4"></rect>
 <rect x="11" y="13" width="7" height="6.5" fill="#f35325"></rect><rect x="19" y="13" width="7" height="6.5" fill="#81bc06"></rect>
 <rect x="11" y="20.5" width="7" height="6.5" fill="#05a6f0"></rect><rect x="19" y="20.5" width="7" height="6.5" fill="#ffba08"></rect>
</svg>
<!-- files -->
<svg class="a" style="left:743px;top:1027px" width="38" height="34" viewBox="0 0 38 34">
 <path d="M1 2 H14 L17 5 V10 H1 Z" fill="#e6a817"></path>
 <rect x="1" y="4" width="36" height="29" rx="1.5" fill="#fbd04a"></rect>
 <path d="M6 33 V24 C6 22 7 21 9 21 H29 C31 21 32 22 32 24 V33 Z" fill="#1a86d9"></path>
 <rect x="12" y="25" width="14" height="1.5" fill="#0b4f90"></rect>
</svg>
<!-- excel -->
<svg class="a" style="left:809px;top:1027px" width="38" height="34" viewBox="0 0 38 34">
 <rect x="9" y="1" width="27" height="32" rx="2" fill="#21a366"></rect>
 <rect x="22" y="1" width="14" height="8" fill="#33c481"></rect>
 <rect x="9" y="17" width="27" height="8" fill="#107c41"></rect>
 <rect x="9" y="25" width="27" height="8" rx="1" fill="#185c37"></rect>
 <rect x="1" y="8" width="18" height="18" rx="2" fill="#107c41"></rect>
 <text x="10" y="22.5" font-family="Liberation Sans" font-weight="bold" font-size="13" fill="#fff" text-anchor="middle">X</text>
</svg>
<!-- word -->
<svg class="a" style="left:875px;top:1027px" width="38" height="34" viewBox="0 0 38 34">
 <rect x="9" y="1" width="27" height="32" rx="2" fill="#2b7cd3"></rect>
 <rect x="9" y="1" width="27" height="8" rx="2" fill="#41a5ee"></rect>
 <rect x="9" y="17" width="27" height="8" fill="#185abd"></rect>
 <rect x="9" y="25" width="27" height="8" rx="1" fill="#103f91"></rect>
 <rect x="1" y="8" width="18" height="18" rx="2" fill="#185abd"></rect>
 <text x="10" y="22.5" font-family="Liberation Sans" font-weight="bold" font-size="12.5" fill="#fff" text-anchor="middle">W</text>
</svg>
<!-- chrome generic -->
<svg class="a" style="left:941px;top:1017px" width="50" height="60" viewBox="0 0 50 60">
 <g id="chr">
 <circle cx="19" cy="26.7" r="18" fill="#db4437"></circle>
 <path d="M19 26.7 L3.4 35.7 A18 18 0 0 0 19 44.7 Z" fill="#0f9d58"></path>
 <path d="M19 26.7 L3.4 35.7 A18 18 0 0 1 3.4 17.7 Z" fill="#0f9d58"></path>
 <path d="M19 26.7 L34.6 17.7 A18 18 0 0 1 19 44.7 Z" fill="#f4b400"></path>
 <circle cx="19" cy="26.7" r="8.2" fill="#fff"></circle><circle cx="19" cy="26.7" r="6.5" fill="#4285f4"></circle>
 </g>
 <circle cx="32.7" cy="13.8" r="12" fill="#0d4b3b" stroke="#232323" stroke-width="1"></circle>
 <text x="32.7" y="19.5" font-family="Liberation Sans" font-size="15" fill="#9fd3bf" text-anchor="middle">M</text>
 <rect x="14.5" y="51.5" width="9" height="4" rx="2" fill="#9a9a9a"></rect>
</svg>
<!-- powerpoint -->
<svg class="a" style="left:1007px;top:1027px" width="38" height="34" viewBox="0 0 38 34">
 <circle cx="19" cy="17" r="16" fill="#ed6c47"></circle>
 <path d="M19 1 A16 16 0 0 1 35 17 H19 Z" fill="#ff8f6b"></path>
 <path d="M19 17 H35 A16 16 0 0 1 19 33 Z" fill="#d35230"></path>
 <rect x="1" y="8" width="18" height="18" rx="2" fill="#c43e1c"></rect>
 <text x="10" y="22.5" font-family="Liberation Sans" font-weight="bold" font-size="13" fill="#fff" text-anchor="middle">P</text>
</svg>
<!-- zoom active -->
<div class="a" style="left:1070px;top:1016px;width:51px;height:57px;border-radius:6px;background:#2a2a2a"></div>
<div class="a" style="left:1062.5px;top:1016px;width:51.5px;height:57.3px;border-radius:6px;background:#323232;border:1px solid #3a3a3a"></div>
<svg class="a" style="left:1074px;top:1025.8px" width="36" height="36.2" viewBox="0 0 36 36">
 <defs><linearGradient id="zg" x1="0" y1="0" x2="0" y2="1"><stop offset="0" stop-color="#0e72ed"></stop><stop offset="1" stop-color="#0b4fd8"></stop></linearGradient></defs>
 <rect x="0" y="0" width="36" height="36" rx="13" fill="url(#zg)"></rect>
 <text x="18" y="21" font-family="Liberation Sans" font-size="9.5" fill="#fff" text-anchor="middle" letter-spacing="0.2">zoom</text>
</svg>
<div class="a" style="left:1080px;top:1068px;width:24px;height:5px;border-radius:3px;background:#4cc2ff"></div>
<!-- chrome k -->
<svg class="a" style="left:1139px;top:1017px" width="50" height="60" viewBox="0 0 50 60">
 <use href="#chr"></use>
 <circle cx="32.7" cy="13.8" r="12" fill="#7d8c94" stroke="#232323" stroke-width="1"></circle>
 <text x="32.7" y="19" font-family="Liberation Sans" font-weight="bold" font-size="13" fill="#e8eef0" text-anchor="middle">k</text>
 <rect x="14.5" y="51.5" width="9" height="4" rx="2" fill="#9a9a9a"></rect>
</svg>
<!-- chrome RSA -->
<svg class="a" style="left:1205px;top:1017px" width="50" height="60" viewBox="0 0 50 60">
 <use href="#chr"></use>
 <circle cx="32.5" cy="13.8" r="12" fill="#1f5fa8" stroke="#232323" stroke-width="1"></circle>
 <text x="32.5" y="17.5" font-family="Liberation Sans" font-weight="bold" font-size="10" fill="#dfe8f5" text-anchor="middle">RSA</text>
 <rect x="14.5" y="51.5" width="9" height="4" rx="2" fill="#9a9a9a"></rect>
</svg>
<!-- whatsapp -->
<svg class="a" style="left:1271px;top:1017px" width="50" height="60" viewBox="0 0 50 60">
 <path d="M4 44 L6.5 35 A17 17 0 1 1 13 41.5 Z" fill="none" stroke="#25d366" stroke-width="3" stroke-linejoin="round"></path>
 <path d="M13 20 C12 24 14 30 19 34 C23 37 27 38 29 36 L30 33 L26 31 L24 33 C21 32 18 29 17 26 L19 24 L17 20 Z" fill="#25d366"></path>
 <rect x="17" y="2" width="30.7" height="23.5" rx="11.75" fill="#4fc3f7"></rect>
 <text x="32.3" y="20" font-family="Liberation Sans" font-size="16" fill="#111" text-anchor="middle">46</text>
 <rect x="14.5" y="51.5" width="9" height="4" rx="2" fill="#9a9a9a"></rect>
</svg>
<!-- tray -->
<svg class="a" style="left:1420px;top:1030px" width="480" height="30" viewBox="1420 1030 480 30" fill="none" stroke="#fff" stroke-width="1.6">
 <path d="M1425 1048 L1433 1040 L1441 1048"></path>
 <path d="M1472 1051 C1466 1051 1466 1043 1472 1043 C1473 1037 1482 1036 1484 1042 C1489 1042 1490 1049 1486 1051 Z" fill="#cfcfcf" stroke="none"></path>
 <circle cx="1486.5" cy="1048" r="6.5" fill="#f5c400" stroke="none"></circle>
 <path d="M1486.5 1044.5 V1048.5 M1486.5 1050.5 V1051.2" stroke="#111" stroke-width="1.5"></path>
 <rect x="1517" y="1032.5" width="6" height="11" rx="3" stroke="#7ed0ee"></rect>
 <path d="M1514 1040 C1514 1046 1526 1046 1526 1040 M1520 1045 V1049" stroke="#7ed0ee"></path>
 <path d="M1530 1045.5 L1544 1038.5 L1538 1055 L1536.5 1047 Z" stroke="#7ed0ee" stroke-linejoin="round"></path>
 <rect x="1565.5" y="1035.5" width="23" height="16" rx="2.5"></rect>
 <path d="M1569 1040 h1 M1573 1040 h1 M1577 1040 h1 M1581 1040 h1 M1585 1040 h1 M1569 1044 h1 M1573 1044 h1 M1577 1044 h1 M1581 1044 h1 M1585 1044 h1 M1571 1048 h12" stroke-width="1.8"></path>
 <rect x="1613" y="1035.5" width="22.5" height="17" rx="3"></rect>
 <path d="M1613 1046.5 H1635.5 M1624.2 1046.5 V1052.5"></path>
 <path d="M1661 1042 C1669 1035 1677 1035 1685 1042 M1664.5 1045.5 C1669.5 1041 1676.5 1041 1681.5 1045.5 M1668 1049 C1671 1046.5 1675 1046.5 1678 1049"></path>
 <circle cx="1673" cy="1051.5" r="1.6" fill="#fff" stroke="none"></circle>
 <path d="M1698 1041 H1702 L1708 1036 V1052 L1702 1047 H1698 Z"></path>
 <path d="M1711 1040.5 C1713 1042.5 1713 1045.5 1711 1047.5 M1714.5 1037.5 C1718.5 1041.5 1718.5 1046.5 1714.5 1050.5 M1718 1034.5 C1724 1040.5 1724 1047.5 1718 1053.5"></path>
 <rect x="1734" y="1037.5" width="20.5" height="13.5" rx="3"></rect>
 <path d="M1756 1041.5 V1046.5" stroke-width="2.4"></path>
 <path d="M1737 1049 V1043 L1740 1040 H1748 V1049 Z" fill="#fff" stroke="none"></path>
 <path d="M1741 1031 L1735.5 1040.5 H1739 L1736.5 1047.5 L1743.5 1037.5 H1740 L1742.5 1031 Z" fill="#fff" stroke="#232323" stroke-width="1"></path>
 <path d="M1869 1052 C1871 1050 1871 1046 1871 1042 C1871 1036 1874 1033.5 1878 1033.5 C1882 1033.5 1885 1036 1885 1042 C1885 1046 1885 1050 1888 1052 V1053 H1869 Z" fill="#fff" stroke="none"></path>
 <path d="M1874.5 1054.5 H1881.5 C1881 1056.3 1879.8 1057 1878 1057 C1876.2 1057 1875 1056.3 1874.5 1054.5 Z" fill="#fff" stroke="none"></path>
</svg>
<svg class="a" style="left:1870px;top:1031px" width="24" height="20" viewBox="0 0 24 20">
 <path d="M5 8.5 H10.5 L5 15.5 H10.5" fill="none" stroke="#232323" stroke-width="2"></path>
 <path d="M13.5 1.5 H20 L13.5 9.5 H20" fill="none" stroke="#232323" stroke-width="4"></path>
 <path d="M13.5 1.5 H20 L13.5 9.5 H20" fill="none" stroke="#fff" stroke-width="1.8"></path>
</svg>
<div class="t" style="left: 1788px; top: 1023.5px; font-size: 17.5px; color: rgb(255, 255, 255); transform: scaleX(1.0589); transform-origin: left top;">8:27 AM</div>
<div class="t" style="left: 1782px; top: 1047.5px; font-size: 17.5px; color: rgb(255, 255, 255); transform: scaleX(1.0862); transform-origin: left top;">9/2/2025</div>


</body></html>
